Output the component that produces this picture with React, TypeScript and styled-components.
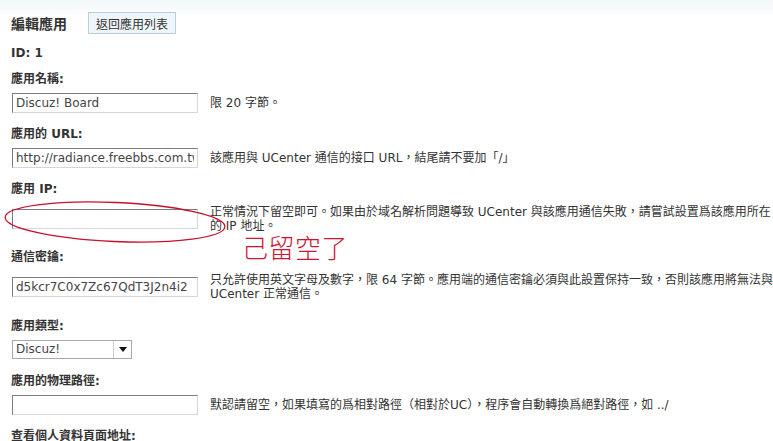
import React from "react";
import styled, { createGlobalStyle } from "styled-components";

const GlobalStyle = createGlobalStyle`
  html, body {
    margin: 0;
    background: #fff linear-gradient(#f1f6f8 0, #fff 18px) no-repeat;
    color: #333;
    font: 12px "DejaVu Sans", "Noto Sans CJK TC", sans-serif;
  }
`;

const Page = styled.div`
  position: relative;
  padding-top: 12px;
  min-height: 441px;
  box-sizing: border-box;
  overflow: hidden;
`;

const Header = styled.div`
  display: flex;
  align-items: center;
  gap: 21px;
  padding-left: 11px;
  height: 22px;
`;

const Title = styled.h3`
  margin: 0;
  font-size: 14px;
  font-weight: bold;
  color: #333;
`;

const BackButton = styled.button`
  height: 22px;
  padding: 0 7px;
  border: 1px solid #b7d0da;
  background: #eef6fa;
  color: #333;
  font: 12px "DejaVu Sans", "Noto Sans CJK TC", sans-serif;
`;

const Label = styled.div<{ $top?: number }>`
  height: 24px;
  line-height: 24px;
  padding-left: 11px;
  margin-top: ${(p) => p.$top ?? 0}px;
  font-weight: bold;
`;

const Row = styled.div`
  display: flex;
  align-items: center;
  gap: 12px;
  padding: 2px 0 9px 12px;
`;

const TextInput = styled.input`
  box-sizing: border-box;
  flex: none;
  width: 186px;
  height: 20px;
  margin: 0;
  padding: 0 3px;
  border: 1px solid;
  border-color: #7c7c7c #d6d6d6 #d6d6d6 #7c7c7c;
  background: #fff;
  color: #444;
  font: 12px "DejaVu Sans", "Noto Sans CJK TC", sans-serif;
  outline: none;
`;

const Helper = styled.div`
  flex: 1;
  max-width: 563px;
  padding: 2px 0;
  line-height: 14px;
  color: #333;
`;

const SelectBox = styled.div`
  box-sizing: border-box;
  display: flex;
  width: 120px;
  height: 19px;
  border: 1px solid #a2aab1;
  background: #fff;
`;

const SelectValue = styled.span`
  flex: 1;
  padding-left: 3px;
  line-height: 17px;
  color: #444;
`;

const SelectArrow = styled.span`
  display: flex;
  align-items: center;
  justify-content: center;
  width: 17px;
  border-left: 1px solid #c9ced2;
`;

const Ellipse = styled.svg`
  position: absolute;
  left: 2px;
  top: 198px;
  overflow: visible;
`;

const Scribble = styled.div`
  position: absolute;
  left: 242px;
  top: 232px;
  font: 300 26px "Noto Sans CJK TC", sans-serif;
  line-height: 30px;
  letter-spacing: 0.5px;
  color: #cf1533;
`;

type Field = {
  label: string;
  value?: string;
  help?: string;
  top?: number;
};

const fields: Field[] = [
  { label: "應用名稱:", value: "Discuz! Board", help: "限 20 字節。", top: 2 },
  {
    label: "應用的 URL:",
    value: "http://radiance.freebbs.com.tw/bbs/uc_server",
    help: "該應用與 UCenter 通信的接口 URL，結尾請不要加「/」",
  },
  {
    label: "應用 IP:",
    value: "",
    help: "正常情況下留空即可。如果由於域名解析問題導致 UCenter 與該應用通信失敗，請嘗試設置爲該應用所在的 IP 地址。",
  },
  {
    label: "通信密鑰:",
    value: "d5kcr7C0x7Zc67QdT3J2n4i2",
    help: "只允許使用英文字母及數字，限 64 字節。應用端的通信密鑰必須與此設置保持一致，否則該應用將無法與 UCenter 正常通信。",
    top: 1,
  },
];

export default function App() {
  return (
    <Page>
      <GlobalStyle />
      <Header>
        <Title>編輯應用</Title>
        <BackButton>返回應用列表</BackButton>
      </Header>
      <Label $top={7}>ID: 1</Label>

      {fields.map((f) => (
        <React.Fragment key={f.label}>
          <Label $top={f.top}>{f.label}</Label>
          <Row>
            <TextInput defaultValue={f.value} />
            <Helper>{f.help}</Helper>
          </Row>
        </React.Fragment>
      ))}

      <Label $top={2}>應用類型:</Label>
      <Row>
        <SelectBox>
          <SelectValue>Discuz!</SelectValue>
          <SelectArrow>
            <svg width="8" height="5" viewBox="0 0 8 5">
              <path d="M0 0h8L4 5z" fill="#111" />
            </svg>
          </SelectArrow>
        </SelectBox>
      </Row>

      <Label $top={1}>應用的物理路徑:</Label>
      <Row>
        <TextInput defaultValue="" />
        <Helper>默認請留空，如果填寫的爲相對路徑（相對於UC），程序會自動轉換爲絕對路徑，如 ../</Helper>
      </Row>

      <Label>查看個人資料頁面地址:</Label>

      <Ellipse width="226" height="48" viewBox="0 0 226 48">
        <ellipse
          cx="113"
          cy="24"
          rx="110"
          ry="19.5"
          fill="none"
          stroke="#c8102e"
          strokeWidth="1.3"
          transform="rotate(2.5 113 24)"
        />
      </Ellipse>
      <Scribble>己留空了</Scribble>
    </Page>
  );
}
